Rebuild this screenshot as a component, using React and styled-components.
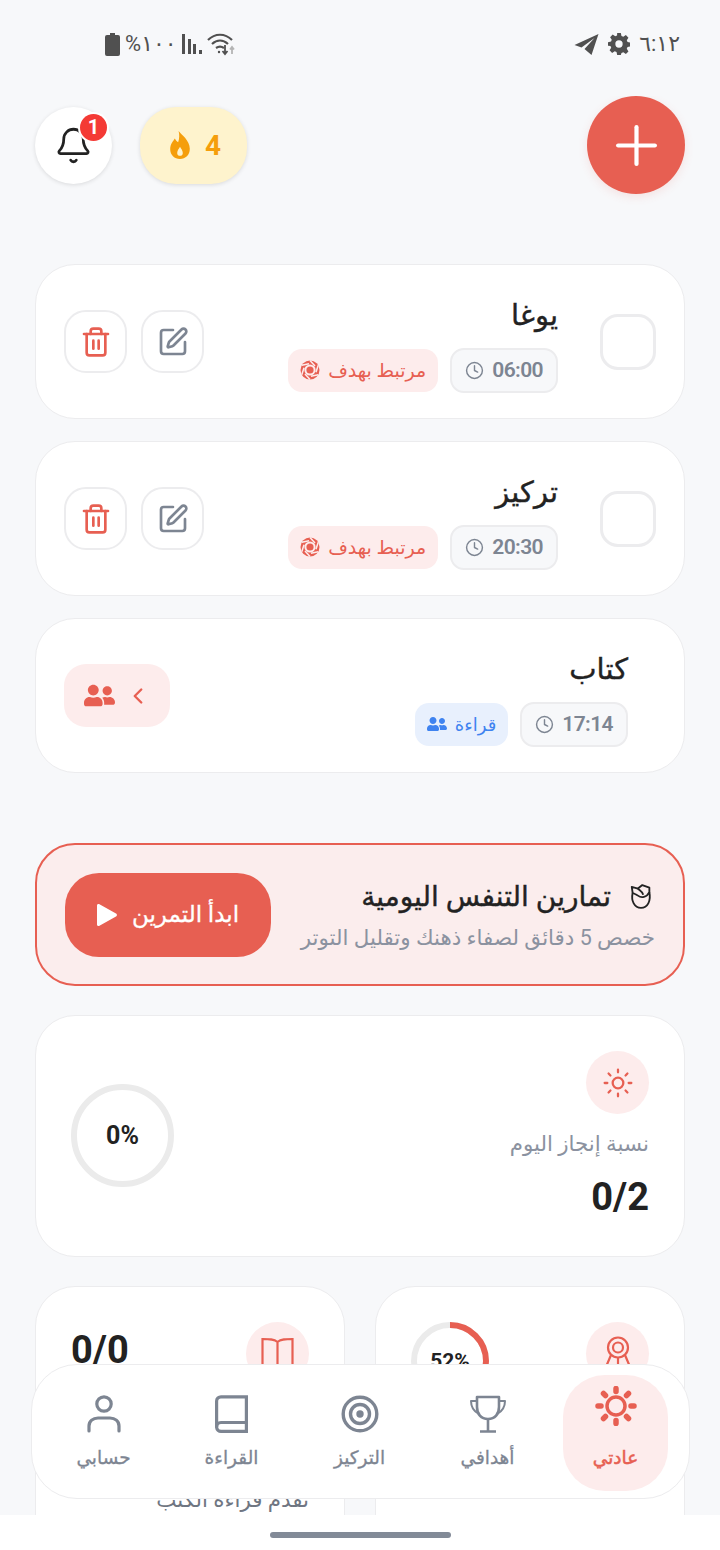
import React from "react";
import styled, { createGlobalStyle } from "styled-components";
import {
  Bell,
  Plus,
  Trash2,
  SquarePen,
  Clock,
  ChevronLeft,
  Sun,
} from "lucide-react";
import { FaUserFriends } from "react-icons/fa";

const red = "#e75f52";
const pink = "#fdecec";
const grey = "#7d8592";
const dark = "#222222";
const line = "#ececee";

const GlobalStyle = createGlobalStyle`
  html, body {
    margin: 0;
    padding: 0;
    background: #f7f8fa;
  }
  * {
    box-sizing: border-box;
  }
  body {
    font-family: Roboto, "Noto Sans", "DejaVu Sans", sans-serif;
    color: ${dark};
  }
`;

const Screen = styled.div`
  position: relative;
  width: 720px;
  height: 1550px;
  display: flex;
  flex-direction: column;
  overflow: hidden;
  background: #f7f8fa;
`;

const StatusBar = styled.div`
  flex: none;
  height: 96px;
  padding: 29px 40px 0 105px;
  display: flex;
  justify-content: space-between;
  align-items: flex-start;
  direction: ltr;
  color: #505050;
  font-size: 22px;
  line-height: 30px;
`;

const StatusGroup = styled.div`
  display: flex;
  align-items: center;
  gap: ${(p) => p.$gap || 7}px;
  height: 30px;
  span {
    letter-spacing: ${(p) => p.$tight || -2}px;
  }
`;

const Content = styled.div`
  flex: 1;
  min-height: 0;
  overflow: hidden;
  padding: 0 35px;
`;

const Header = styled.div`
  height: 98px;
  display: flex;
  justify-content: space-between;
  align-items: center;
  margin-bottom: 70px;
`;

const AddButton = styled.button`
  width: 98px;
  height: 98px;
  border: 0;
  border-radius: 50%;
  background: ${red};
  color: #fff;
  display: flex;
  align-items: center;
  justify-content: center;
  box-shadow: 0 3px 10px rgba(232, 96, 86, 0.14);
`;

const HeaderLeft = styled.div`
  display: flex;
  gap: 28px;
`;

const Streak = styled.div`
  width: 107px;
  height: 77px;
  border-radius: 36px;
  background: #fef3cd;
  color: #f59e0b;
  font-size: 28px;
  font-weight: 700;
  display: flex;
  align-items: center;
  justify-content: center;
  gap: 15px;
  padding-left: 4px;
  box-shadow: 0 1px 4px rgba(0, 0, 0, 0.12);
`;

const BellButton = styled.div`
  position: relative;
  width: 77px;
  height: 77px;
  border-radius: 50%;
  background: #fff;
  display: flex;
  align-items: center;
  justify-content: center;
  box-shadow: 0 1px 4px rgba(0, 0, 0, 0.12);
`;

const BellBadge = styled.span`
  position: absolute;
  top: 7px;
  right: 5px;
  width: 27px;
  height: 27px;
  border-radius: 50%;
  background: #f43a35;
  color: #fff;
  font-size: 20px;
  font-weight: 700;
  line-height: 27px;
  text-align: center;
  box-shadow: 0 0 0 2px #fff;
`;

const CardList = styled.div`
  display: flex;
  flex-direction: column;
  gap: 22px;
  margin-bottom: 70px;
`;

const HabitCard = styled.div`
  height: 155px;
  border: 1.5px solid ${line};
  border-radius: 40px;
  background: #fff;
  display: flex;
  align-items: center;
  padding: 0 ${(p) => (p.$group ? 56 : 28)}px 0 28px;
`;

const Check = styled.div`
  flex: none;
  width: 56px;
  height: 56px;
  border: 3px solid ${line};
  border-radius: 18px;
  margin-left: 42px;
`;

const HabitBody = styled.div`
  flex: 1;
  display: flex;
  flex-direction: column;
  align-items: flex-start;
  padding-top: 2px;
`;

const HabitTitle = styled.div`
  font-size: 29px;
  font-weight: 500;
  line-height: 44px;
  margin-bottom: 11px;
  -webkit-text-stroke: 0.4px currentColor;
`;

const Tags = styled.div`
  display: flex;
  align-items: center;
  gap: 12px;
`;

const TimeTag = styled.div`
  height: 45px;
  padding: 0 13px;
  border: 2px solid ${line};
  border-radius: 14px;
  background: #f7f8fa;
  color: ${grey};
  font-size: 21px;
  font-weight: 600;
  letter-spacing: -0.6px;
  display: flex;
  align-items: center;
  gap: 8px;
  direction: ltr;
`;

const InfoTag = styled.div`
  height: 43px;
  padding: 0 12px;
  border-radius: 14px;
  background: ${(p) => (p.$blue ? "#e8f0fd" : pink)};
  color: ${(p) => (p.$blue ? "#3f83f0" : red)};
  font-size: ${(p) => (p.$blue ? 18 : 19)}px;
  font-weight: 500;
  display: flex;
  align-items: center;
  gap: 8px;
`;

const Actions = styled.div`
  display: flex;
  gap: 14px;
`;

const IconButton = styled.div`
  width: 63px;
  height: 63px;
  border: 2px solid ${line};
  border-radius: 22px;
  color: ${(p) => p.$color};
  display: flex;
  align-items: center;
  justify-content: center;
`;

const GroupButton = styled.div`
  width: 106px;
  height: 63px;
  border-radius: 22px;
  background: ${pink};
  color: ${red};
  display: flex;
  align-items: center;
  justify-content: center;
  gap: 10px;
`;

const BreathCard = styled.div`
  height: 143px;
  border: 2px solid ${red};
  border-radius: 40px;
  background: #fbeded;
  display: flex;
  align-items: center;
  justify-content: space-between;
  padding: 0 28px;
  margin-bottom: 29px;
`;

const BreathTitle = styled.div`
  font-size: 28px;
  font-weight: 500;
  line-height: 40px;
  display: flex;
  align-items: center;
  gap: 19px;
  padding-right: 3px;
  margin-bottom: 6px;
  -webkit-text-stroke: 0.4px currentColor;
`;

const BreathText = styled.div`
  font-size: 21.4px;
  line-height: 30px;
  color: #8b92a0;
`;

const StartButton = styled.button`
  width: 206px;
  height: 84px;
  border: 0;
  border-radius: 34px;
  background: ${red};
  color: #fff;
  font-family: inherit;
  font-size: 23px;
  font-weight: 500;
  display: flex;
  align-items: center;
  justify-content: center;
  gap: 15px;
  -webkit-text-stroke: 0.3px currentColor;
`;

const StatCard = styled.div`
  border: 1.5px solid ${line};
  border-radius: 40px;
  background: #fff;
`;

const TodayCard = styled(StatCard)`
  height: 242px;
  padding: 35px 35px 0;
  display: flex;
  justify-content: space-between;
  margin-bottom: 29px;
`;

const TodayInfo = styled.div`
  display: flex;
  flex-direction: column;
  align-items: flex-start;
`;

const IconCircle = styled.div`
  flex: none;
  width: 63px;
  height: 63px;
  border-radius: 50%;
  background: ${pink};
  color: ${red};
  display: flex;
  align-items: center;
  justify-content: center;
`;

const StatLabel = styled.div`
  margin-top: 14px;
  font-size: 21.4px;
  line-height: 32px;
  color: #8b92a0;
`;

const StatValue = styled.div`
  margin-top: 15px;
  font-size: 38px;
  line-height: 44px;
  font-weight: 700;
  direction: ltr;
`;

const Ring = styled.div`
  position: relative;
  flex: none;
  width: ${(p) => p.$size}px;
  height: ${(p) => p.$size}px;
  margin-top: ${(p) => p.$top || 0}px;
  display: flex;
  align-items: center;
  justify-content: center;
  font-size: ${(p) => p.$font}px;
  font-weight: 700;
  svg {
    position: absolute;
    inset: 0;
    transform: rotate(-90deg);
  }
`;

const SmallGrid = styled.div`
  display: grid;
  grid-template-columns: 310px 310px;
  justify-content: space-between;
`;

const SmallCard = styled(StatCard)`
  height: 320px;
  padding: 35px 35px 0;
`;

const SmallTop = styled.div`
  display: flex;
  justify-content: space-between;
  align-items: flex-start;
`;

const SmallValue = styled.div`
  font-size: 38px;
  line-height: 44px;
  font-weight: 700;
  margin-top: 6px;
  direction: ltr;
`;

const SmallLabel = styled.div`
  margin-top: 99px;
  font-size: 21.4px;
  line-height: 32px;
  color: #6f7682;
`;

const BottomNav = styled.nav`
  position: absolute;
  left: 31px;
  top: 1364px;
  width: 659px;
  height: 135px;
  border: 1.5px solid ${line};
  border-radius: 46px;
  background: #fff;
  display: flex;
  justify-content: center;
  align-items: flex-start;
  gap: 23px;
  padding: 9.5px 2px 0 0;
`;

const NavTab = styled.div`
  width: 105px;
  height: 116px;
  border-radius: 42px;
  background: ${(p) => (p.$active ? pink : "transparent")};
  color: ${(p) => (p.$active ? red : grey)};
  display: flex;
  flex-direction: column;
  align-items: center;
  font-size: 18.5px;
  font-weight: 500;
  line-height: 30px;
  span {
    -webkit-text-stroke: ${(p) => (p.$active ? 0.5 : 0.3)}px currentColor;
  }
`;

const NavIcon = styled.div`
  height: 68px;
  padding-top: ${(p) => (p.$active ? 11 : 20)}px;
  display: flex;
  justify-content: center;
`;

const HomeBar = styled.div`
  flex: none;
  height: 35px;
  background: #fff;
  display: flex;
  justify-content: center;
  align-items: flex-start;
  padding-top: 17px;
`;

const HomePill = styled.div`
  width: 181px;
  height: 6px;
  border-radius: 3px;
  background: #828a97;
`;

const Battery = () => (
  <svg width="15" height="23" viewBox="0 0 15 23">
    <path d="M5 0h5v2h3a2 2 0 0 1 2 2v17a2 2 0 0 1-2 2H2a2 2 0 0 1-2-2V4a2 2 0 0 1 2-2h3z" fill="currentColor" />
  </svg>
);

const Signal = () => (
  <svg width="20" height="20" viewBox="0 0 20 20" fill="currentColor">
    <rect x="0" y="0" width="3" height="20" />
    <rect x="6" y="5" width="3" height="15" />
    <rect x="11" y="10" width="3" height="10" />
    <rect x="17" y="16" width="3" height="4" />
  </svg>
);

const Wifi = () => (
  <svg width="30" height="24" viewBox="0 0 30 24" fill="none" stroke="currentColor" strokeWidth="2.2">
    <path d="M1 8c7-7 17-7 24 0" />
    <path d="M5 12c5-4.500 11-4.500 16 0" />
    <path d="M9 16c3-2 5-2 8 0" />
    <circle cx="12" cy="20" r="1.200" fill="currentColor" stroke="none" />
    <path d="M18 13v9m-2.500-3 2.500 3 2.500-3" strokeWidth="1.800" />
    <path d="M25 22v-7m-2 2.500 2-2.500 2 2.500" strokeWidth="1.800" stroke="#b4b4b4" />
  </svg>
);

const Plane = () => (
  <svg width="25" height="21" viewBox="0 0 24 21">
    <path d="M24 0 0 11l7 2.500L20 4 10 15l7 6z" fill="currentColor" />
  </svg>
);

const Gear = () => (
  <svg width="22" height="22" viewBox="0 0 24 24">
    <path
      fillRule="evenodd"
      fill="currentColor"
      d="M10 0h4l.7 3.300 2 .8 2.800-1.800 2.800 2.800-1.800 2.800.8 2 3.300.7v4l-3.300.7-.8 2 1.800 2.800-2.800 2.800-2.800-1.800-2 .8L14 24h-4l-.7-3.300-2-.8-2.800 1.800-2.800-2.800 1.800-2.800-.8-2L0 14v-4l3.300-.7.8-2L2.300 4.500l2.800-2.800 2.800 1.800 2-.8zM12 8a4 4 0 1 0 0 8 4 4 0 0 0 0-8z"
    />
  </svg>
);

const Flame = () => (
  <svg width="20" height="28" viewBox="0 0 21 30">
    <path
      fillRule="evenodd"
      fill="currentColor"
      d="M9 0c3 4 12 10 12 19 0 6.500-4.500 11-10.500 11S0 25.500 0 19.500C0 14 3 11 5 8c1 2 2 3 3.500 4C10 8 10 4 9 0zM10.500 17c-1 2-3 4-3 6.500a3 3 0 0 0 6 0c0-2.500-2-4.500-3-6.500z"
    />
  </svg>
);

const Medal = () => (
  <svg width="34" height="40" viewBox="0 0 34 40" fill="none" stroke="currentColor" strokeWidth="2.200">
    <circle cx="17" cy="13.500" r="10" />
    <circle cx="17" cy="13.500" r="5" />
    <path d="M10 21 2 40m22-19 8 19M17 24v8" />
  </svg>
);

const BookOpen = () => (
  <svg width="33" height="34" viewBox="0 0 33 34" fill="none" stroke="currentColor" strokeWidth="2.200">
    <path d="M16.500 5C13 2 8 2 1.500 2v26c7 0 11.500 0 15 3 3.500-3 8-3 15-3V2c-6.500 0-11.500 0-15 3zM16.500 5v26" />
  </svg>
);

const RoseBud = () => (
  <svg width="22" height="29" viewBox="0 0 25 30" fill="none" stroke="currentColor" strokeWidth="2.100" strokeLinejoin="round">
    <path d="M3 11C1 20 5 28 12.500 28S24 20 22 10" />
    <path d="M3 11 2 4l7 2 5-4 8 3v5c-3 6-9 7-13 4-2-1.500-4-2-6-3z" />
    <path d="M9 6c2 2 5 3 6 7" />
  </svg>
);

// aperture: a solid disc cut by slanted blade lines, with a dot in the middle
const GoalIcon = () => (
  <svg width="20" height="20" viewBox="0 0 20 20">
    <circle cx="10" cy="10" r="9.500" fill="currentColor" />
    <circle cx="10" cy="10" r="5.600" fill={pink} />
    <circle cx="10" cy="10" r="3.600" fill="currentColor" />
    {[0, 60, 120, 180, 240, 300].map((a) => (
      <path key={a} d="M10 0.500 15 6" stroke={pink} strokeWidth="1.500" transform={`rotate(${a} 10 10)`} />
    ))}
  </svg>
);

const NavSun = () => (
  <svg width="44" height="40" viewBox="0 0 44 40" fill="none" stroke="currentColor">
    <circle cx="22" cy="20" r="9" strokeWidth="3.500" />
    <path
      d="M22 2.500v3M22 34.500v3M4 20h3M37 20h3M9.500 7.500l2 2M32.500 30.500l2 2M9.500 32.500l2-2M32.500 9.500l2-2"
      strokeWidth="5.500"
      strokeLinecap="round"
    />
  </svg>
);

const NavTrophy = () => (
  <svg width="38" height="38" viewBox="0 0 38 38" fill="none" stroke="currentColor" strokeWidth="2.600" strokeLinejoin="round">
    <path d="M8 2h22v10c0 7-4 12-11 12S8 19 8 12z" />
    <path d="M8 6H2c0 6 2 10 8 13M30 6h6c0 6-2 10-8 13" strokeWidth="2" />
    <path d="M19 24v12M11 36.500h16" />
  </svg>
);

const NavTarget = () => (
  <svg width="38" height="38" viewBox="0 0 38 38" fill="none" stroke="currentColor" strokeWidth="3.400">
    <circle cx="19" cy="19" r="16.800" />
    <circle cx="19" cy="19" r="9.500" />
    <circle cx="19" cy="19" r="3.700" fill="currentColor" stroke="none" />
  </svg>
);

const NavBook = () => (
  <svg width="33" height="38" viewBox="0 0 33 38" fill="none" stroke="currentColor" strokeWidth="3.200">
    <path d="M6 1.800h25.400v34.600H6a4.400 4.400 0 0 1-4.400-4V6A4.400 4.400 0 0 1 6 1.800z" />
    <path d="M1.600 32c0-3 2-4.500 4.400-4.500h25.400" />
  </svg>
);

const NavUser = () => (
  <svg width="34" height="38" viewBox="0 0 34 38" fill="none" stroke="currentColor" strokeWidth="3.200" strokeLinecap="round">
    <circle cx="17" cy="9" r="7.200" />
    <path d="M2 36v-5c0-5 4-8 9-8h12c5 0 9 3 9 8v5" />
  </svg>
);

const ProgressRing = ({ size, stroke, value, font, top, children }) => {
  const r = (size - stroke) / 2;
  const c = 2 * Math.PI * r;
  return (
    <Ring $size={size} $font={font} $top={top}>
      <svg width={size} height={size}>
        <circle cx={size / 2} cy={size / 2} r={r} fill="none" stroke="#ebebeb" strokeWidth={stroke} />
        <circle
          cx={size / 2}
          cy={size / 2}
          r={r}
          fill="none"
          stroke={red}
          strokeWidth={stroke}
          strokeDasharray={`${(c * value) / 100} ${c}`}
        />
      </svg>
      {children}
    </Ring>
  );
};

const habits = [
  { title: "يوغا", time: "06:00" },
  { title: "تركيز", time: "20:30" },
];

const tabs = [
  { label: "عادتي", icon: <NavSun />, active: true },
  { label: "أهدافي", icon: <NavTrophy /> },
  { label: "التركيز", icon: <NavTarget /> },
  { label: "القراءة", icon: <NavBook /> },
  { label: "حسابي", icon: <NavUser /> },
];

export default function App() {
  return (
    <Screen dir="rtl">
      <GlobalStyle />
      <StatusBar>
        <StatusGroup $gap={5}>
          <Battery />
          <span>%١٠٠</span>
          <Signal />
          <Wifi />
        </StatusGroup>
        <StatusGroup $gap={9} $tight={-1.5}>
          <Plane />
          <Gear />
          <span>٦:١٢</span>
        </StatusGroup>
      </StatusBar>

      <Content>
        <Header>
          <AddButton>
            <Plus size={63} strokeWidth={1.6} />
          </AddButton>
          <HeaderLeft>
            <Streak>
              <span>4</span>
              <Flame />
            </Streak>
            <BellButton>
              <Bell size={39} strokeWidth={1.7} color="#222" />
              <BellBadge>1</BellBadge>
            </BellButton>
          </HeaderLeft>
        </Header>

        <CardList>
          {habits.map((h) => (
            <HabitCard key={h.title}>
              <Check />
              <HabitBody>
                <HabitTitle>{h.title}</HabitTitle>
                <Tags>
                  <TimeTag>
                    <Clock size={19} strokeWidth={1.8} />
                    {h.time}
                  </TimeTag>
                  <InfoTag>
                    مرتبط بهدف
                    <GoalIcon />
                  </InfoTag>
                </Tags>
              </HabitBody>
              <Actions>
                <IconButton $color={grey}>
                  <SquarePen size={32} strokeWidth={2} />
                </IconButton>
                <IconButton $color={red}>
                  <Trash2 size={32} strokeWidth={2} />
                </IconButton>
              </Actions>
            </HabitCard>
          ))}
          <HabitCard $group>
            <HabitBody>
              <HabitTitle>كتاب</HabitTitle>
              <Tags>
                <TimeTag>
                  <Clock size={19} strokeWidth={1.8} />
                  17:14
                </TimeTag>
                <InfoTag $blue>
                  قراءة
                  <FaUserFriends size={20} />
                </InfoTag>
              </Tags>
            </HabitBody>
            <GroupButton>
              <ChevronLeft size={26} strokeWidth={2.2} />
              <FaUserFriends size={31} />
            </GroupButton>
          </HabitCard>
        </CardList>

        <BreathCard>
          <div>
            <BreathTitle>
              <RoseBud />
              تمارين التنفس اليومية
            </BreathTitle>
            <BreathText>خصص 5 دقائق لصفاء ذهنك وتقليل التوتر</BreathText>
          </div>
          <StartButton>
            ابدأ التمرين
            <svg width="20" height="22" viewBox="0 0 20 22">
              <path d="M2 0 19 9.500a1.700 1.700 0 0 1 0 3L2 22a1.500 1.500 0 0 1-2-1.500V1.500A1.500 1.500 0 0 1 2 0z" fill="currentColor" />
            </svg>
          </StartButton>
        </BreathCard>

        <TodayCard>
          <TodayInfo>
            <IconCircle>
              <Sun size={32} strokeWidth={1.7} />
            </IconCircle>
            <StatLabel>نسبة إنجاز اليوم</StatLabel>
            <StatValue>0/2</StatValue>
          </TodayInfo>
          <ProgressRing size={103} stroke={6} value={0} font={25} top={33}>
            0%
          </ProgressRing>
        </TodayCard>

        <SmallGrid>
          <SmallCard>
            <SmallTop>
              <IconCircle>
                <Medal />
              </IconCircle>
              <ProgressRing size={78} stroke={6} value={52} font={21}>
                52%
              </ProgressRing>
            </SmallTop>
          </SmallCard>
          <SmallCard>
            <SmallTop>
              <IconCircle>
                <BookOpen />
              </IconCircle>
              <SmallValue>0/0</SmallValue>
            </SmallTop>
            <SmallLabel>تقدم قراءة الكتب</SmallLabel>
          </SmallCard>
        </SmallGrid>
      </Content>

      <BottomNav>
        {tabs.map((t) => (
          <NavTab key={t.label} $active={t.active}>
            <NavIcon $active={t.active}>{t.icon}</NavIcon>
            <span>{t.label}</span>
          </NavTab>
        ))}
      </BottomNav>

      <HomeBar>
        <HomePill />
      </HomeBar>
    </Screen>
  );
}
